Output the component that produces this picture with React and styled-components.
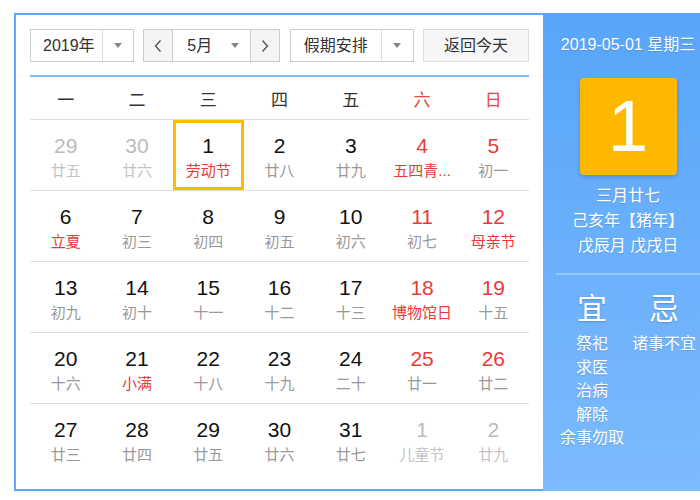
import React from 'react';
import styled, { createGlobalStyle } from 'styled-components';

const Global = createGlobalStyle`
  html, body { margin: 0; padding: 0; background: #fff; overflow: hidden; }
  body { font-family: "Liberation Sans", "Noto Sans CJK SC", sans-serif; }
`;

const Page = styled.div`
  width: 700px;
  height: 500px;
  overflow: hidden;
  box-sizing: border-box;
  padding: 13px 0 0 14px;
`;

const Frame = styled.div`
  display: flex;
  width: max-content;
`;

const Main = styled.div`
  box-sizing: border-box;
  width: 529px;
  flex: none;
  border: 2px solid #5ea8f8;
  border-right: none;
  padding: 14px 14px 15px 14px;
  background: #fff;
`;

const Toolbar = styled.div`
  display: flex;
  justify-content: space-between;
  height: 33px;
`;

const Box = styled.div`
  display: flex;
  box-sizing: border-box;
  height: 33px;
  border: 1px solid #ccc;
  background: #fff;
  color: #333;
  font-size: 16px;
`;

const BoxText = styled.div`
  width: ${p => p.$w}px;
  box-sizing: border-box;
  padding-left: ${p => p.$pl}px;
  line-height: 31px;
  white-space: nowrap;
`;

const ArrowPart = styled.div`
  width: ${p => p.$w}px;
  border-left: 1px solid #ddd;
  display: flex;
  align-items: center;
  justify-content: center;
`;

const Caret = styled.span`
  width: 0;
  height: 0;
  border-left: 4px solid transparent;
  border-right: 4px solid transparent;
  border-top: 5px solid #888;
`;

const NavBtn = styled.div`
  width: 28px;
  background: #f4f4f4;
  display: flex;
  align-items: center;
  justify-content: center;
  ${p => (p.$side === 'left' ? 'border-right: 1px solid #ccc;' : 'border-left: 1px solid #ccc;')}
`;

const MonthMid = styled.div`
  width: 77px;
  box-sizing: border-box;
  display: flex;
  align-items: center;
  justify-content: space-between;
  padding: 0 11px 0 14px;
  line-height: 31px;
`;

const TodayBtn = styled.div`
  box-sizing: border-box;
  width: 106px;
  height: 33px;
  border: 1px solid #ddd;
  background: #f6f6f6;
  color: #333;
  font-size: 16px;
  line-height: 31px;
  text-align: center;
`;

const BlueLine = styled.div`
  margin-top: 13px;
  height: 2px;
  background: #86bcf5;
`;

const WeekHead = styled.div`
  display: grid;
  grid-template-columns: repeat(7, 1fr);
  height: 42px;
  align-items: center;
`;

const HeadCell = styled.div`
  text-align: center;
  font-size: 17px;
  color: ${p => (p.$red ? '#e8453c' : '#333')};
`;

const WeekRow = styled.div`
  display: grid;
  grid-template-columns: repeat(7, 1fr);
  border-top: 1px solid #ddd;
  height: 71px;
  box-sizing: border-box;
`;

const Cell = styled.div`
  display: flex;
  flex-direction: column;
  align-items: center;
  height: 70px;
  box-sizing: border-box;
  padding-top: 14px;
  ${p => (p.$sel ? 'box-shadow: inset 0 0 0 3px #ffbb00;' : '')}
`;

const DayNum = styled.div`
  font-size: 21px;
  line-height: 24px;
  color: ${p => (p.$other ? '#bbb' : p.$red ? '#e83a3a' : '#111')};
`;

const Lunar = styled.div`
  margin-top: 4px;
  font-size: 15px;
  line-height: 18px;
  white-space: nowrap;
  color: ${p => (p.$other ? '#c4c4c4' : p.$red ? '#e83a3a' : '#999')};
`;

const Side = styled.div`
  width: 170px;
  flex: none;
  box-sizing: border-box;
  padding: 22px 13px 0;
  background: linear-gradient(#58a5fa, #7cbbfd);
  color: #fff;
  display: flex;
  flex-direction: column;
  align-items: center;
  text-shadow: 0 1px 1px rgba(0, 0, 0, 0.12);
`;

const DateLine = styled.div`
  font-size: 16px;
  line-height: 20px;
  white-space: nowrap;
`;

const BigDay = styled.div`
  margin-top: 23px;
  width: 97px;
  height: 97px;
  border-radius: 4px;
  background: #ffb800;
  box-shadow: 0 2px 4px rgba(0, 0, 0, 0.18);
  font-size: 72px;
  line-height: 97px;
  text-align: center;
  text-shadow: none;
`;

const LunarInfo = styled.div`
  margin-top: 8px;
  font-size: 16px;
  line-height: 25px;
  text-align: center;
  white-space: nowrap;
`;

const Sep = styled.div`
  margin-top: 15px;
  align-self: stretch;
  height: 2px;
  background: rgba(255, 255, 255, 0.3);
`;

const YiJi = styled.div`
  margin-top: 16px;
  align-self: stretch;
  display: grid;
  grid-template-columns: 1fr 1fr;
`;

const Col = styled.div`
  display: flex;
  flex-direction: column;
  align-items: center;
`;

const BigWord = styled.div`
  font-size: 30px;
  line-height: 36px;
  text-shadow: 0 1px 2px rgba(0, 0, 0, 0.2);
`;

const Items = styled.div`
  margin-top: 5px;
  display: flex;
  flex-direction: column;
  align-items: center;
  font-size: 16px;
  line-height: 23.5px;
  white-space: nowrap;
`;

const Chevron = ({ dir }) => (
  <svg width="10" height="14" viewBox="0 0 10 14">
    <path
      d={dir === 'left' ? 'M7.5 1.5 L2.5 7 L7.5 12.5' : 'M2.5 1.5 L7.5 7 L2.5 12.5'}
      fill="none"
      stroke="#555"
      strokeWidth="1.4"
    />
  </svg>
);

const weeks = [
  [
    { d: 29, l: '廿五', o: true },
    { d: 30, l: '廿六', o: true },
    { d: 1, l: '劳动节', lr: true, sel: true },
    { d: 2, l: '廿八' },
    { d: 3, l: '廿九' },
    { d: 4, l: '五四青...', lr: true },
    { d: 5, l: '初一' },
  ],
  [
    { d: 6, l: '立夏', lr: true },
    { d: 7, l: '初三' },
    { d: 8, l: '初四' },
    { d: 9, l: '初五' },
    { d: 10, l: '初六' },
    { d: 11, l: '初七' },
    { d: 12, l: '母亲节', lr: true },
  ],
  [
    { d: 13, l: '初九' },
    { d: 14, l: '初十' },
    { d: 15, l: '十一' },
    { d: 16, l: '十二' },
    { d: 17, l: '十三' },
    { d: 18, l: '博物馆日', lr: true },
    { d: 19, l: '十五' },
  ],
  [
    { d: 20, l: '十六' },
    { d: 21, l: '小满', lr: true },
    { d: 22, l: '十八' },
    { d: 23, l: '十九' },
    { d: 24, l: '二十' },
    { d: 25, l: '廿一' },
    { d: 26, l: '廿二' },
  ],
  [
    { d: 27, l: '廿三' },
    { d: 28, l: '廿四' },
    { d: 29, l: '廿五' },
    { d: 30, l: '廿六' },
    { d: 31, l: '廿七' },
    { d: 1, l: '儿童节', o: true },
    { d: 2, l: '廿九', o: true },
  ],
];

const heads = ['一', '二', '三', '四', '五', '六', '日'];

export default function App() {
  return (
    <Page>
      <Global />
      <Frame>
        <Main>
          <Toolbar>
            <Box>
              <BoxText $w={71} $pl={12}>2019年</BoxText>
              <ArrowPart $w={30}><Caret /></ArrowPart>
            </Box>
            <Box>
              <NavBtn $side="left"><Chevron dir="left" /></NavBtn>
              <MonthMid>
                <span>5月</span>
                <Caret />
              </MonthMid>
              <NavBtn $side="right"><Chevron dir="right" /></NavBtn>
            </Box>
            <Box>
              <BoxText $w={90} $pl={13}>假期安排</BoxText>
              <ArrowPart $w={31}><Caret /></ArrowPart>
            </Box>
            <TodayBtn>返回今天</TodayBtn>
          </Toolbar>
          <BlueLine />
          <WeekHead>
            {heads.map((h, i) => (
              <HeadCell key={h} $red={i >= 5}>{h}</HeadCell>
            ))}
          </WeekHead>
          {weeks.map((w, wi) => (
            <WeekRow key={wi}>
              {w.map((c, ci) => (
                <Cell key={ci} $sel={c.sel}>
                  <DayNum $other={c.o} $red={ci >= 5}>{c.d}</DayNum>
                  <Lunar $other={c.o} $red={c.lr}>{c.l}</Lunar>
                </Cell>
              ))}
            </WeekRow>
          ))}
        </Main>
        <Side>
          <DateLine>2019-05-01 星期三</DateLine>
          <BigDay>1</BigDay>
          <LunarInfo>
            三月廿七
            <br />
            己亥年【猪年】
            <br />
            戊辰月 戊戌日
          </LunarInfo>
          <Sep />
          <YiJi>
            <Col>
              <BigWord>宜</BigWord>
              <Items>
                <span>祭祀</span>
                <span>求医</span>
                <span>治病</span>
                <span>解除</span>
                <span>余事勿取</span>
              </Items>
            </Col>
            <Col>
              <BigWord>忌</BigWord>
              <Items>
                <span>诸事不宜</span>
              </Items>
            </Col>
          </YiJi>
        </Side>
      </Frame>
    </Page>
  );
}
